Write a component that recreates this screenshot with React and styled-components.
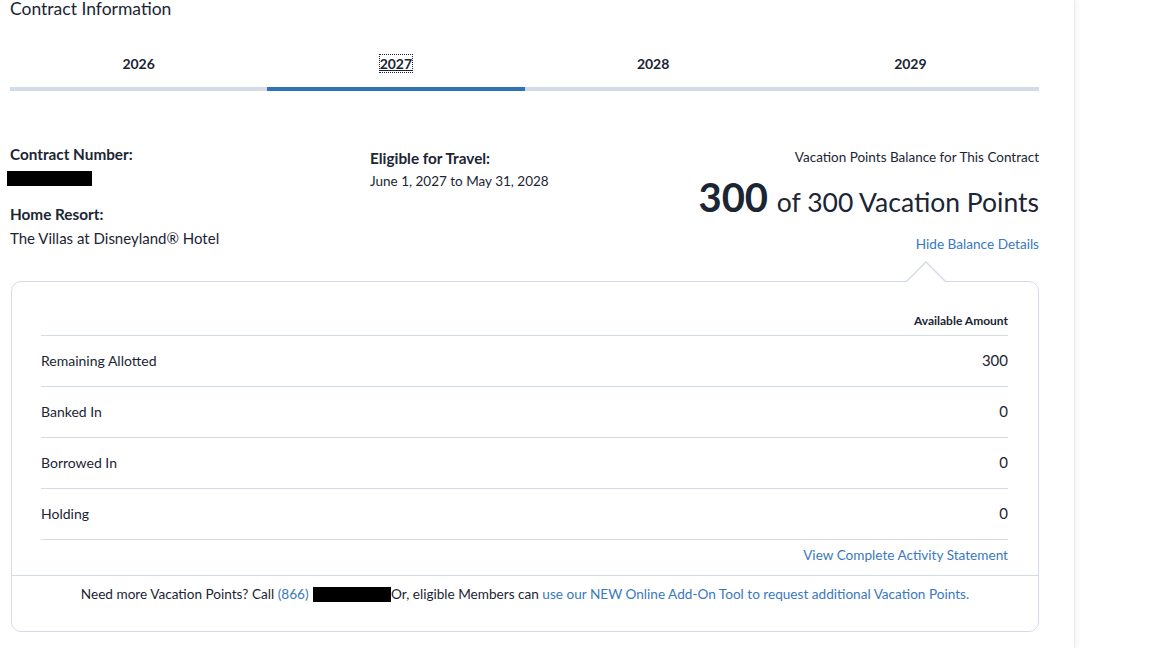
import React, { useState } from "react";
import styled, { createGlobalStyle } from "styled-components";

const colors = {
  text: "#1b2534",
  link: "#3a78c0",
  line: "#d3dce6",
  active: "#2f74b9",
};

const GlobalStyle = createGlobalStyle`
  html, body {
    margin: 0;
    padding: 0;
    background: #fff;
  }
  body {
    font-family: Lato, "Open Sans", sans-serif;
    color: ${colors.text};
  }
`;

const Page = styled.div`
  display: flex;
  min-height: 648px;
`;

const Main = styled.div`
  width: 1075px;
  border-right: 1px solid #ececec;
  box-shadow: 3px 0 4px rgba(0, 0, 0, 0.04);
  padding: 0 35px 0 10px;
  box-sizing: border-box;
`;

const Heading = styled.h2`
  margin: 0;
  font-size: 17.5px;
  font-weight: 400;
  line-height: 20px;
  margin-top: -1px;
`;

const Tabs = styled.div`
  display: grid;
  grid-template-columns: repeat(4, 1fr);
  margin-top: 37px;
`;

const Tab = styled.button`
  border: none;
  background: none;
  font-family: inherit;
  font-size: 14px;
  font-weight: 700;
  color: ${colors.text};
  padding: 0 0 15px;
  margin-top: -1px;
  border-bottom: 4px solid ${(p) => (p.$active ? colors.active : colors.line)};
  cursor: pointer;
  span {
    outline: ${(p) => (p.$active ? "1px dotted #1b2534" : "none")};
    text-decoration: ${(p) => (p.$active ? "underline" : "none")};
  }
`;

const Summary = styled.div`
  display: grid;
  grid-template-columns: 360px 1fr auto;
  margin-top: 54px;
`;

const Label = styled.div`
  font-size: 15.3px;
  font-weight: 700;
  line-height: 18px;
  margin-top: ${(p) => p.$top || 0}px;
`;

const Redacted = styled.div`
  width: ${(p) => p.$w}px;
  height: 15px;
  background: #000;
  display: inline-block;
  vertical-align: middle;
`;

const Field = styled.div`
  margin-bottom: ${(p) => p.$gap || 0}px;
  ${Redacted} {
    margin: 8px 0 0 -3px;
    display: block;
  }
`;

const Value = styled.div`
  font-size: ${(p) => p.$size || 15}px;
  margin-top: ${(p) => p.$top || 7}px;
  line-height: 18px;
`;

const Balance = styled.div`
  display: flex;
  flex-direction: column;
  align-items: flex-end;
  padding-top: 4px;
`;

const BalanceCaption = styled.div`
  font-size: 13.5px;
`;

const Points = styled.div`
  margin-top: 14px;
  font-size: 26.5px;
  line-height: 36px;
  strong {
    font-size: 40px;
    font-weight: 700;
    margin-right: 2px;
  }
`;

const Link = styled.a`
  color: ${colors.link};
  text-decoration: none;
  cursor: pointer;
  font-size: ${(p) => p.$size || 13.6}px;
`;

const ToggleLink = styled(Link)`
  margin-top: 16px;
`;

const Card = styled.div`
  position: relative;
  margin: 29px 0 0 1px;
  border: 1px solid ${colors.line};
  border-radius: 10px;
  width: 1028px;
  box-sizing: border-box;
  &::before,
  &::after {
    content: "";
    position: absolute;
    right: 92px;
    width: 0;
    height: 0;
    border-left: 20px solid transparent;
    border-right: 20px solid transparent;
  }
  &::before {
    top: -21px;
    border-bottom: 20px solid ${colors.line};
  }
  &::after {
    top: -19px;
    border-bottom: 20px solid #fff;
  }
`;

const Table = styled.div`
  padding: 31px 30px 0 29px;
`;

const HeaderRow = styled.div`
  display: flex;
  justify-content: flex-end;
  font-size: 12px;
  font-weight: 700;
  padding-bottom: 7px;
  border-bottom: 1px solid ${colors.line};
`;

const Row = styled.div`
  display: flex;
  justify-content: space-between;
  align-items: center;
  height: 51px;
  padding-bottom: 2px;
  box-sizing: border-box;
  font-size: 14px;
  border-bottom: 1px solid ${colors.line};
`;

const Amount = styled.span`
  font-size: 15px;
`;

const Statement = styled.div`
  display: flex;
  justify-content: flex-end;
  padding: 7px 0 12px;
`;

const Footer = styled.div`
  border-top: 1px solid ${colors.line};
  text-align: center;
  font-size: 13.6px;
  padding: 9px 0 28px;
  line-height: 18px;
  ${Redacted} {
    width: 78px;
    margin: -2px 0 0 1px;
  }
`;

const rows = [
  ["Remaining Allotted", 300],
  ["Banked In", 0],
  ["Borrowed In", 0],
  ["Holding", 0],
];

const years = [2026, 2027, 2028, 2029];

export default function App() {
  const [year, setYear] = useState(2027);
  return (
    <Page>
      <GlobalStyle />
      <Main>
        <Heading>Contract Information</Heading>
        <Tabs>
          {years.map((y) => (
            <Tab key={y} $active={y === year} onClick={() => setYear(y)}>
              <span>{y}</span>
            </Tab>
          ))}
        </Tabs>

        <Summary>
          <div>
            <Field $gap={19}>
              <Label>Contract Number:</Label>
              <Redacted $w={85} />
            </Field>
            <Field>
              <Label>Home Resort:</Label>
              <Value $top={6}>The Villas at Disneyland® Hotel</Value>
            </Field>
          </div>
          <div>
            <Field>
              <Label $top={4}>Eligible for Travel:</Label>
              <Value $size={13.5} $top={5}>
                June 1, 2027 to May 31, 2028
              </Value>
            </Field>
          </div>
          <Balance>
            <BalanceCaption>Vacation Points Balance for This Contract</BalanceCaption>
            <Points>
              <strong>300</strong> of 300 Vacation Points
            </Points>
            <ToggleLink>Hide Balance Details</ToggleLink>
          </Balance>
        </Summary>

        <Card>
          <Table>
            <HeaderRow>Available Amount</HeaderRow>
            {rows.map(([name, amount]) => (
              <Row key={name}>
                <span>{name}</span>
                <Amount>{amount}</Amount>
              </Row>
            ))}
            <Statement>
              <Link>View Complete Activity Statement</Link>
            </Statement>
          </Table>
          <Footer>
            Need more Vacation Points? Call <Link>(866)</Link> <Redacted />
            Or, eligible Members can{" "}
            <Link>use our NEW Online Add-On Tool to request additional Vacation Points.</Link>
          </Footer>
        </Card>
      </Main>
    </Page>
  );
}
